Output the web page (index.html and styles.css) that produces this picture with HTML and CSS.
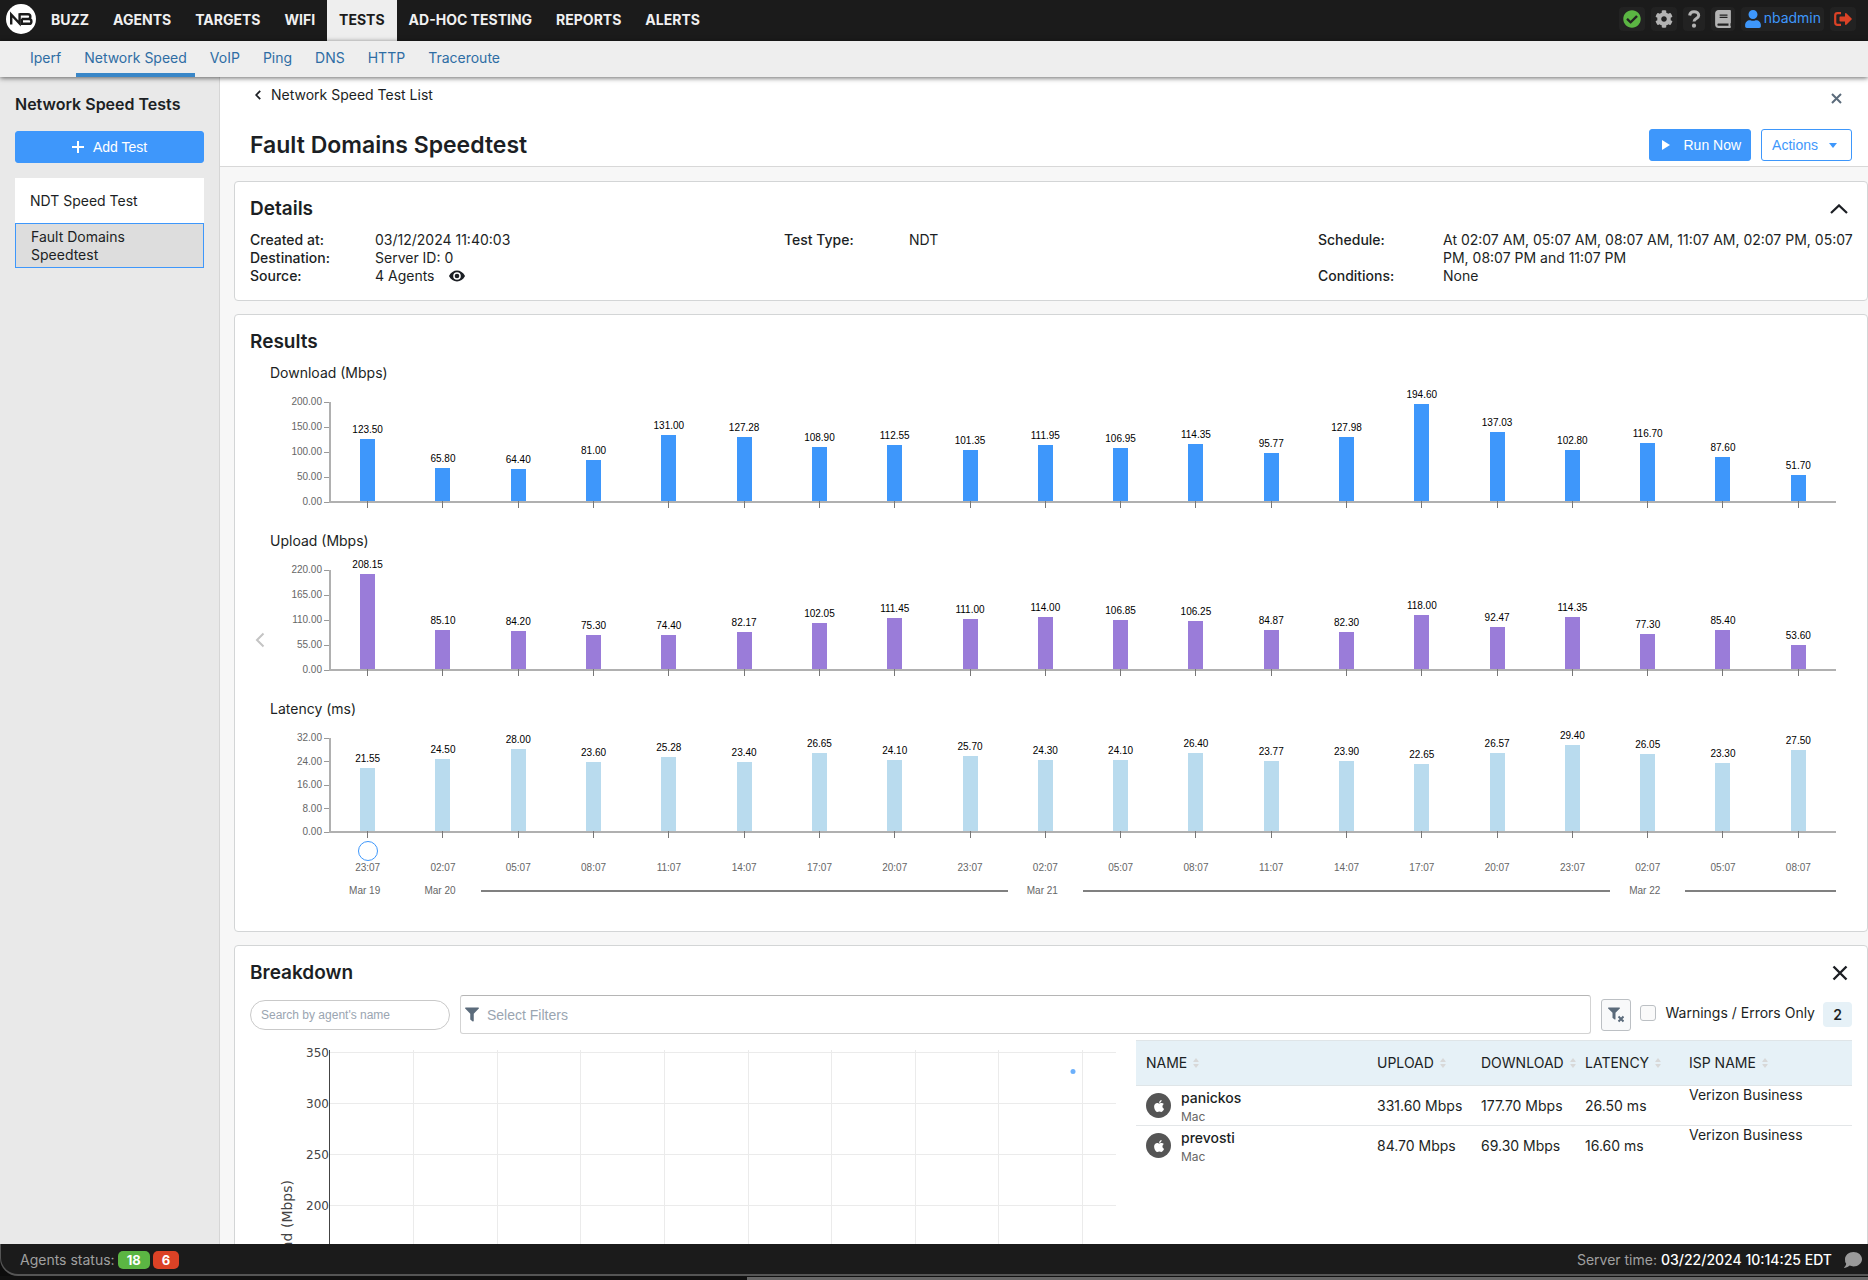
FILE: index.html
```html
<!DOCTYPE html>
<html lang="en">
<head>
<meta charset="utf-8">
<title>Network Speed Tests</title>
<link rel="stylesheet" href="styles.css">
</head>
<body>
<svg class="defs" aria-hidden="true">
  <symbol id="i-check" viewBox="0 0 512 512"><path d="M504 256c0 136.967-111.033 248-248 248S8 392.967 8 256 119.033 8 256 8s248 111.033 248 248zM227.314 387.314l184-184c6.248-6.248 6.248-16.379 0-22.627l-22.627-22.627c-6.248-6.249-16.379-6.249-22.628 0L216 308.118l-70.059-70.059c-6.248-6.248-16.379-6.248-22.628 0l-22.627 22.627c-6.248 6.248-6.248 16.379 0 22.627l104 104c6.249 6.249 16.379 6.249 22.628.001z"/></symbol>
  <symbol id="i-gear" viewBox="0 0 512 512"><path d="M487.4 315.7l-42.6-24.6c4.3-23.2 4.3-47 0-70.2l42.6-24.6c4.9-2.8 7.1-8.6 5.5-14-11.1-35.6-30-67.8-54.7-94.6-3.8-4.1-10-5.1-14.8-2.3L380.8 110c-17.9-15.4-38.5-27.3-60.8-35.1V25.8c0-5.6-3.9-10.5-9.4-11.7-36.7-8.2-74.3-7.8-109.2 0-5.5 1.2-9.4 6.1-9.4 11.7V75c-22.2 7.9-42.8 19.8-60.8 35.1L88.7 85.5c-4.9-2.8-11-1.9-14.8 2.3-24.7 26.7-43.6 58.9-54.7 94.6-1.7 5.4.6 11.2 5.5 14L67.3 221c-4.3 23.2-4.3 47 0 70.2l-42.6 24.6c-4.9 2.8-7.1 8.6-5.5 14 11.1 35.6 30 67.8 54.7 94.6 3.8 4.1 10 5.1 14.8 2.3l42.6-24.6c17.9 15.4 38.5 27.3 60.8 35.1v49.2c0 5.6 3.9 10.5 9.4 11.7 36.7 8.2 74.3 7.8 109.2 0 5.5-1.2 9.4-6.1 9.4-11.7v-49.2c22.2-7.9 42.8-19.8 60.8-35.1l42.6 24.6c4.9 2.8 11 1.9 14.8-2.3 24.7-26.7 43.6-58.9 54.7-94.6 1.5-5.5-.7-11.3-5.6-14.1zM256 336c-44.1 0-80-35.9-80-80s35.9-80 80-80 80 35.9 80 80-35.9 80-80 80z"/></symbol>
  <symbol id="i-question" viewBox="0 0 14 18"><path d="M2.6 5.4C3 3 4.6 1.7 7 1.7c2.700 0 4.700 1.500 4.700 3.800C11.700 8.600 7 8.400 7 11.500" fill="none" stroke="currentColor" stroke-width="3"/><circle cx="7" cy="15.700" r="2.100"/></symbol>
  <symbol id="i-book" viewBox="0 0 448 512"><path d="M448 360V24c0-13.300-10.700-24-24-24H96C43 0 0 43 0 96v320c0 53 43 96 96 96h328c13.300 0 24-10.700 24-24v-16c0-7.500-3.500-14.300-8.900-18.700-4.200-15.400-4.200-59.300 0-74.700 5.400-4.300 8.900-11.100 8.900-18.600zM128 134c0-3.300 2.700-6 6-6h212c3.300 0 6 2.700 6 6v20c0 3.300-2.700 6-6 6H134c-3.300 0-6-2.700-6-6v-20zm0 64c0-3.300 2.700-6 6-6h212c3.300 0 6 2.700 6 6v20c0 3.300-2.700 6-6 6H134c-3.300 0-6-2.700-6-6v-20zm253.400 250H96c-17.700 0-32-14.300-32-32 0-17.600 14.400-32 32-32h285.400c-1.900 17.100-1.900 46.900 0 64z"/></symbol>
  <symbol id="i-user" viewBox="0 0 448 512"><path d="M224 256c70.700 0 128-57.300 128-128S294.700 0 224 0 96 57.300 96 128s57.300 128 128 128zm89.600 32h-16.700c-22.200 10.200-46.900 16-72.900 16s-50.600-5.800-72.900-16h-16.700C60.200 288 0 348.200 0 422.400V464c0 26.500 21.500 48 48 48h352c26.500 0 48-21.500 48-48v-41.600c0-74.200-60.200-134.400-134.400-134.400z"/></symbol>
  <symbol id="i-exit" viewBox="0 0 18 14"><path d="M7 1.200H3.500A2.300 2.300 0 0 0 1.200 3.500v7a2.300 2.300 0 0 0 2.300 2.300H7" fill="none" stroke="currentColor" stroke-width="2.200"/><path d="M5.500 5.200c0-.4.300-.7.700-.7H11V1.700c0-.7.800-1 1.300-.5l5.300 5.200c.3.300.3.900 0 1.200l-5.300 5.200c-.5.500-1.300.2-1.300-.5V9.500H6.200a.7.700 0 0 1-.7-.7z"/></symbol>
  <symbol id="i-filter" viewBox="0 0 512 512"><path d="M487.976 0H24.028C2.710 0-8.047 25.866 7.058 40.971L192 225.941V432c0 7.831 3.821 15.170 10.237 19.662l80 55.980C298.020 518.690 320 507.493 320 487.980V225.941l184.947-184.970C520.021 25.896 509.338 0 487.976 0z"/></symbol>
  <symbol id="i-apple" viewBox="0 0 376 512"><path d="M318.700 268.700c-.2-36.700 16.400-64.400 50-84.800-18.800-26.900-47.200-41.700-84.700-44.600-35.500-2.800-74.300 20.700-88.500 20.700-15 0-49.400-19.700-76.400-19.700C63.300 141.200 4 184.800 4 273.500q0 39.300 14.400 81.200c12.800 36.700 59 126.700 107.200 125.200 25.200-.6 43-17.900 75.800-17.900 31.800 0 48.300 17.900 76.400 17.900 48.600-.7 90.400-82.500 102.600-119.300-65.200-30.700-61.700-90-61.700-91.900zm-56.600-164.200c27.300-32.400 24.800-61.900 24-72.500-24.100 1.400-52 16.400-67.900 34.900-17.500 19.800-27.800 44.300-25.600 71.900 26.100 2 49.900-11.400 69.500-34.300z"/></symbol>
  <symbol id="i-sort" viewBox="0 0 6 10"><path d="M3 0l2.500 3.200a.5.500 0 0 1-.4.900H.9a.5.500 0 0 1-.4-.9zM3 10L.5 6.800a.5.500 0 0 1 .4-.9h4.200a.5.500 0 0 1 .4.900z"/></symbol>
</svg>

<header class="topbar">
  <a class="logo" href="#" aria-label="Home">
    <svg viewBox="0 0 30 30" width="30" height="30"><circle cx="15" cy="15" r="15" fill="#fff"/><g fill="none" stroke="#1b1b1b" stroke-width="2.400"><path d="M5.200 20.500V10.500L13.600 19.500V9.300"/><path d="M13.600 10.300H22a2.200 2.200 0 0 1 0 4.700H15.500H23a2.300 2.300 0 0 1 0 4.800H15.800V15"/></g></svg>
  </a>
  <nav class="mainnav" aria-label="Main">
    <a href="#">BUZZ</a><a href="#">AGENTS</a><a href="#">TARGETS</a><a href="#">WIFI</a><a class="active" href="#">TESTS</a><a href="#">AD-HOC TESTING</a><a href="#">REPORTS</a><a href="#">ALERTS</a>
  </nav>
  <div class="tools">
    <button class="tool ok" aria-label="Status"><svg width="18" height="18"><use href="#i-check"/></svg></button>
    <button class="tool" aria-label="Settings"><svg width="18" height="18"><use href="#i-gear"/></svg></button>
    <button class="tool" aria-label="Help"><svg width="14" height="18"><use href="#i-question"/></svg></button>
    <button class="tool" aria-label="Documentation"><svg width="16" height="18"><use href="#i-book"/></svg></button>
    <a class="tool user" href="#"><svg width="16" height="18"><use href="#i-user"/></svg>nbadmin</a>
    <button class="tool exit" aria-label="Log out"><svg width="18" height="14"><use href="#i-exit"/></svg></button>
  </div>
</header>

<nav class="subnav" aria-label="Tests">
  <a href="#">Iperf</a><a class="active" href="#">Network Speed</a><a href="#">VoIP</a><a href="#">Ping</a><a href="#">DNS</a><a href="#">HTTP</a><a href="#">Traceroute</a>
</nav>

<div class="body">
  <aside class="sidebar">
    <h2>Network Speed Tests</h2>
    <button class="btn primary add"><svg width="12" height="12" viewBox="0 0 12 12"><path d="M6 0v12M0 6h12" stroke="#fff" stroke-width="2"/></svg>Add Test</button>
    <div class="tests">
      <a href="#">NDT Speed Test</a>
      <a class="active" href="#">Fault Domains Speedtest</a>
    </div>
  </aside>

  <main>
    <div class="pagehead">
      <div class="headrow">
        <a class="back" href="#"><svg width="6" height="10" viewBox="0 0 6 10"><path d="M5.200 .8L1.200 5l4 4.200" fill="none" stroke="currentColor" stroke-width="1.800"/></svg>Network Speed Test List</a>
        <button class="plain close" aria-label="Close"><svg width="11" height="11" viewBox="0 0 11 11"><path d="M1 1l9 9M10 1l-9 9" stroke="currentColor" stroke-width="2"/></svg></button>
      </div>
      <div class="headrow titlerow">
        <h1>Fault Domains Speedtest</h1>
        <div class="actions">
          <button class="btn primary run"><svg width="8" height="10" viewBox="0 0 8 10"><path d="M0 0l8 5-8 5z" fill="#fff"/></svg>Run Now</button>
          <button class="btn outline">Actions<svg width="8" height="5" viewBox="0 0 8 5"><path d="M0 0h8L4 5z" fill="currentColor"/></svg></button>
        </div>
      </div>
    </div>

    <div class="cards">
      <section class="card">
        <div class="cardhead"><h2>Details</h2><button class="plain" aria-label="Collapse"><svg width="18" height="10" viewBox="0 0 18 10"><path d="M1 9l8-7.600L17 9" fill="none" stroke="currentColor" stroke-width="2.200"/></svg></button></div>
        <div class="details">
          <dl><dt>Created at:</dt><dd>03/12/2024 11:40:03</dd><dt>Destination:</dt><dd>Server ID: 0</dd><dt>Source:</dt><dd class="src">4 Agents <svg width="16" height="12" viewBox="0 0 16 12"><path fill="#1c1f24" fill-rule="evenodd" d="M8 .5c3.300 0 6.200 2 7.900 5.200a.7.700 0 0 1 0 .6C14.200 9.500 11.300 11.500 8 11.500S1.800 9.500.1 6.300a.7.700 0 0 1 0-.6C1.800 2.500 4.700.5 8 .5zM8 2.200a3.800 3.800 0 1 0 0 7.600 3.800 3.800 0 0 0 0-7.600z"/><circle cx="8" cy="6" r="2.300" fill="#1c1f24"/></svg></dd></dl>
          <dl><dt>Test Type:</dt><dd>NDT</dd></dl>
          <dl><dt>Schedule:</dt><dd class="schedule">At 02:07 AM, 05:07 AM, 08:07 AM, 11:07 AM, 02:07 PM, 05:07 PM, 08:07 PM and 11:07 PM</dd><dt>Conditions:</dt><dd>None</dd></dl>
        </div>
      </section>

      <section class="card">
        <div class="cardhead"><h2>Results</h2></div>
        <div class="results">
          <button class="plain prev" aria-label="Earlier results"><svg width="10" height="16" viewBox="0 0 10 16"><path d="M8.500 1.500L2 8l6.500 6.500" fill="none" stroke="currentColor" stroke-width="2"/></svg></button>
          <div class="charts" id="charts"></div>
        </div>
      </section>

      <section class="card">
        <div class="cardhead"><h2>Breakdown</h2><button class="plain" aria-label="Close breakdown"><svg width="16" height="16" viewBox="0 0 16 16"><path d="M1.500 1.500l13 13M14.500 1.500l-13 13" stroke="currentColor" stroke-width="2.400"/></svg></button></div>
        <div class="filters">
          <input class="search" type="text" placeholder="Search by agent's name" aria-label="Search by agent's name">
          <label class="filterbox"><svg width="14" height="15"><use href="#i-filter"/></svg><input type="text" placeholder="Select Filters" aria-label="Select Filters"></label>
          <button class="clear" aria-label="Clear filters"><svg width="16" height="16" viewBox="0 0 16 16"><svg width="12" height="13"><use href="#i-filter"/></svg><path d="M10.500 9.500l5 5M15.500 9.500l-5 5" stroke="currentColor" stroke-width="2"/></svg></button>
          <label class="warn"><input type="checkbox">Warnings / Errors Only</label>
          <span class="count">2</span>
        </div>
        <div class="breakdown">
          <svg class="scatter" viewBox="0 0 870 460">
            <path stroke="#ebebeb" stroke-width="1" d="M80 12.500h786M80 63.500h786M80 114.500h786M80 165.500h786M80 216.500h786M80 267.500h786M80 318.500h786M163.500 10v370M247.500 10v370M330.500 10v370M414.500 10v370M498.500 10v370M581.500 10v370M665.500 10v370M748.500 10v370M832.500 10v370"/>
            <path stroke="#444" stroke-width="1" d="M79.500 10v370"/>
            <g text-anchor="end"><text x="79" y="17">350</text><text x="79" y="68">300</text><text x="79" y="119">250</text><text x="79" y="170">200</text></g>
            <text class="axis" transform="translate(42 140) rotate(-90)" text-anchor="end">Upload (Mbps)</text>
            <circle cx="823" cy="31.500" r="2.500" fill="#6cb0fb"/>
          </svg>
          <table>
            <colgroup><col class="c-name"><col class="c-num"><col class="c-num"><col class="c-num"><col></colgroup>
            <thead><tr><th>NAME<svg width="6" height="10"><use href="#i-sort"/></svg></th><th>UPLOAD<svg width="6" height="10"><use href="#i-sort"/></svg></th><th>DOWNLOAD<svg width="6" height="10"><use href="#i-sort"/></svg></th><th>LATENCY<svg width="6" height="10"><use href="#i-sort"/></svg></th><th>ISP NAME<svg width="6" height="10"><use href="#i-sort"/></svg></th></tr></thead>
            <tbody>
              <tr><td><div class="agent"><span class="os"><svg width="10" height="14"><use href="#i-apple"/></svg></span><div><b>panickos</b><small>Mac</small></div></div></td><td>331.60 Mbps</td><td>177.70 Mbps</td><td>26.50 ms</td><td class="isp">Verizon Business</td></tr>
              <tr><td><div class="agent"><span class="os"><svg width="10" height="14"><use href="#i-apple"/></svg></span><div><b>prevosti</b><small>Mac</small></div></div></td><td>84.70 Mbps</td><td>69.30 Mbps</td><td>16.60 ms</td><td class="isp">Verizon Business</td></tr>
            </tbody>
          </table>
        </div>
      </section>
    </div>
  </main>
</div>

<div class="dock">
  <footer class="status">
    <div class="agents">Agents status: <span class="pill up">18</span><span class="pill down">6</span></div>
    <div class="time">Server time: <b>03/22/2024 10:14:25 EDT</b><svg width="18" height="16" viewBox="0 0 18 16"><path fill="#9a9a9a" d="M9.500 0C14.200 0 18 3.200 18 7.200s-3.800 7.200-8.500 7.200c-1.400 0-2.700-.3-3.800-.8C4.500 14.800 2.500 15.800.6 16c-.4 0-.6-.4-.3-.7.900-1 1.700-2.200 1.900-3.600A6.600 6.600 0 0 1 1 7.200C1 3.200 4.800 0 9.500 0z"/></svg></div>
  </footer>
  <div class="desk"><i></i></div>
</div>
<script src="app.js"></script>
</body>
</html>
```
FILE: styles.css
```css
* { box-sizing: border-box; }

body {
  margin: 0;
  height: 100vh;
  display: flex;
  flex-direction: column;
  overflow: hidden;
  background: #f7f7f7;
  color: #1c1f24;
  font: 14px/18px Inter, "Liberation Sans", sans-serif;
}

h1, h2, dl, dd { margin: 0; }
a { color: inherit; text-decoration: none; }
button, input { font: inherit; color: inherit; }
svg { display: block; fill: currentColor; flex: none; }
.defs { position: absolute; width: 0; height: 0; }

/* Top bar */
.topbar {
  flex: none;
  display: flex;
  height: 41px;
  background: #1b1b1b;
  color: #f0f0f0;
}
.logo { padding: 4px 3px 0 6px; }
.mainnav { display: flex; font-weight: 700; }
.mainnav a { padding: 0 12px; line-height: 40px; }
.mainnav .active { background: #eee; color: #1b1b1b; }
.tools {
  display: flex;
  gap: 6px;
  margin-left: auto;
  padding: 7px 12px 0 0;
  color: #b3b3b3;
}
.tool {
  display: flex;
  align-items: center;
  gap: 3px;
  height: 24px;
  padding: 0 4px;
  border: 0;
  border-radius: 4px;
  background: #222;
}
.tool.ok { color: #5bb543; }
.tool.user { padding-right: 3px; color: #3e97fb; line-height: 22px; align-items: flex-start; }
.tool.user svg { margin-top: 3px; }
.tool.exit { color: #db4226; }

/* Secondary navigation */
.subnav {
  flex: none;
  display: flex;
  gap: 7px;
  height: 36px;
  padding-left: 22px;
  background: #eee;
  color: #2e6da4;
  box-shadow: 0 1px 5px rgba(0, 0, 0, .6);
  z-index: 1;
}
.subnav a { padding: 0 8px; line-height: 34px; }
.subnav .active { border-bottom: 4px solid #3a87c8; }

.body { flex: 1; display: flex; min-height: 0; }

/* Sidebar */
.sidebar {
  flex: none;
  width: 220px;
  padding: 17px 15px;
  background: #e9e9e9;
  border-right: 1px solid #d6d6d6;
}
.sidebar h2 { font-size: 16px; line-height: 20px; font-weight: 600; white-space: nowrap; }
.btn {
  display: flex;
  align-items: center;
  justify-content: center;
  height: 32px;
  border: 1px solid #3e97fb;
  border-radius: 3px;
  font-family: "Liberation Sans", Arial, sans-serif;
}
.primary { background: #3e97fb; color: #fff; }
.outline { background: #fff; color: #3e97fb; }
.add { width: 100%; margin-top: 17px; gap: 9px; }
.tests { margin-top: 15px; background: #fff; }
.tests a {
  display: flex;
  align-items: center;
  height: 45px;
  padding: 0 15px;
}
.tests .active { background: #ddd; border: 1px solid #3e97fb; }

/* Page heading */
main { flex: 1; min-width: 0; overflow: hidden; }
.pagehead {
  padding: 8px 16px 5px 30px;
  background: #fff;
  border-bottom: 1px solid #d8d8d8;
}
.headrow { display: flex; justify-content: space-between; align-items: center; }
.back { display: flex; align-items: center; gap: 10px; padding-left: 5px; }
.plain { display: flex; padding: 0; border: 0; background: none; }
.close { margin: 8px 10px 0 0; color: #5b6b7b; }
.titlerow { margin-top: 25px; }
h1 { font-size: 23px; line-height: 32px; font-weight: 600; }
.actions { display: flex; gap: 10px; }
.run { gap: 13px; padding: 0 9px 0 12px; }
.outline { gap: 11px; padding: 0 14px 0 10px; }

/* Cards */
.cards { display: flex; flex-direction: column; gap: 13px; padding: 14px 0 15px 14px; }
.card { padding: 15px; background: #fff; border: 1px solid #d3d5d6; border-radius: 4px; }
.cardhead { display: flex; justify-content: space-between; align-items: center; height: 24px; }
.cardhead h2 { font-size: 19px; line-height: 24px; font-weight: 600; }
.cardhead .plain { margin-right: 4px; }

.details { display: grid; grid-template-columns: repeat(3, 1fr); margin-top: 10px; }
.details dl { display: grid; grid-template-columns: 125px 1fr; align-content: start; }
.details dt { font-weight: 500; }
.details .schedule { margin-right: -8px; }
.src { display: flex; align-items: center; gap: 14px; }

/* Results */
.results { display: grid; grid-template-columns: 20px 1fr; align-items: center; margin-top: 9px; }
.prev { color: #c4c4c4; padding-left: 5px; }
.charts { padding: 0 16px 18px 0; }
.chart { margin-bottom: 29px; }
.chart.last { margin-bottom: 9px; }
.chart h3 { margin: 0 0 19px; font-size: 14px; line-height: 20px; font-weight: 400; }
.plot, .timeline {
  display: grid;
  grid-template-columns: 60px 1fr;
  font: 10px/14px "Liberation Sans", Arial, sans-serif;
  color: #666;
}
.plot { grid-template-rows: 100px; }
.last .plot { grid-template-rows: 94px; }
.ticks { display: flex; flex-direction: column; justify-content: space-between; }
.ticks span { display: flex; align-items: center; justify-content: flex-end; gap: 2px; height: 0; }
.ticks span::after { content: ""; width: 6px; height: 1px; background: #999; }
.bars {
  display: flex;
  padding-left: 1px;
  box-shadow: inset 2px 0 #b0b0b0;
  border-bottom: 2px solid #b0b0b0;
  margin: 0 0 -1px -1px;
}
.slot { flex: 1 1 0; display: flex; flex-direction: column; align-items: center; justify-content: flex-end; margin-bottom: -7px; color: #000; }
.slot i { width: 15px; margin-top: 2px; flex: none; }
.slot::after { content: ""; width: 1px; height: 7px; background: #777; flex: none; }
.download i { background: #3e97fb; }
.upload i { background: #9a7cd9; }
.latency i { background: #b9dbee; }
.handle {
  width: 20px;
  height: 20px;
  border: 1px solid #3e97fb;
  border-radius: 50%;
  background: #fff;
}
.row { grid-column: 2; display: grid; grid-auto-flow: column; grid-auto-columns: minmax(0, 1fr); }
.row > * { display: flex; justify-content: center; }
.dates { margin-top: 9px; }
.dates span { padding-right: 6px; }
.dates i { height: 2px; margin-top: 6px; background: #808080; }

/* Breakdown */
.filters { display: flex; align-items: center; height: 39px; margin-top: 10px; }
input::placeholder { color: #9aa5b1; opacity: 1; }
.search {
  width: 200px;
  height: 30px;
  padding: 0 10px;
  border: 1px solid #c9c9c9;
  border-radius: 15px;
  font: 12px "Liberation Sans", Arial, sans-serif;
}
.filterbox {
  flex: 1;
  display: flex;
  align-items: center;
  gap: 8px;
  height: 39px;
  margin: 0 10px;
  padding: 0 4px;
  border: 1px solid #d3d3d3;
  border-top-color: #b5b5b5;
  border-radius: 3px;
  color: #5b6b7b;
}
.filterbox input { flex: 1; border: 0; outline: 0; padding: 0; font: 14px "Liberation Sans", Arial, sans-serif; }
.clear {
  display: flex;
  align-items: center;
  justify-content: center;
  width: 30px;
  height: 32px;
  padding: 0;
  border: 1px solid #bcc0c4;
  border-radius: 3px;
  background: #f8f9fa;
  color: #5b6b7b;
}
.warn { display: flex; align-items: center; gap: 9px; margin: 0 8px 0 9px; padding-bottom: 4px; white-space: nowrap; }
.warn input {
  appearance: none;
  width: 16px;
  height: 16px;
  margin: 0;
  border: 1px solid #bcc0c4;
  border-radius: 3px;
  background: #fafafa;
}
.count { width: 29px; border-radius: 4px; background: #e6f1f7; line-height: 25px; font-weight: 600; text-align: center; }
.breakdown { display: grid; grid-template-columns: 870fr 716fr; gap: 16px; align-items: start; margin-top: 6px; }
.scatter { width: 100%; font: 12px "DejaVu Sans", Verdana, sans-serif; fill: #444; }
.axis { font-size: 14px; }
table { width: 100%; table-layout: fixed; border-collapse: collapse; }
.c-name { width: 231px; }
.c-num { width: 104px; }
th {
  height: 45px;
  padding: 0 0 0 10px;
  background: #e6f1f7;
  border: solid #dfe5e8;
  border-width: 1px 0;
  font-weight: 400;
  text-align: left;
  white-space: nowrap;
}
th svg { display: inline-block; margin-left: 6px; color: #d8d8d8; }
td { height: 40px; padding: 0 0 0 10px; border-bottom: 1px solid #e3e6e8; white-space: nowrap; }
tbody tr:last-child td { border: 0; }
.isp { vertical-align: top; }
.agent { display: flex; align-items: center; gap: 10px; }
.agent b { display: block; font-weight: 500; line-height: 22px; }
.agent small { display: block; font-size: 12px; line-height: 16px; color: #666; }
.os {
  display: flex;
  align-items: center;
  justify-content: center;
  width: 25px;
  height: 25px;
  border-radius: 50%;
  background: #555;
  color: #fff;
}

/* Status bar */
.dock { flex: none; background: #0c0c0c; }
.status {
  display: flex;
  justify-content: space-between;
  height: 32px;
  padding: 1px 6px 0 19px;
  background: #1b1b1b;
  border: solid #555;
  border-width: 0 0 2px 1px;
  border-radius: 0 0 0 18px;
  color: #a0a0a0;
  line-height: 30px;
}
.agents, .time { display: flex; align-items: center; gap: 4px; }
.agents { gap: 3px; }
.pill { border-radius: 5px; padding: 0 9px; line-height: 18px; font-size: 13px; font-weight: 700; color: #fff; }
.up { background: #5bb543; }
.down { background: #db4226; }
.time b { font-weight: 500; color: #fff; }
.time svg { margin-left: 8px; }
.desk { height: 4px; padding-top: 1px; background: #111; }
.desk i { display: block; width: 60%; height: 3px; margin-left: auto; background: #666; }
```
FILE: app.js
```js
const series = [
  { name: 'Download (Mbps)', cls: 'download', max: 200, ticks: 5,
    values: [123.5, 65.8, 64.4, 81, 131, 127.28, 108.9, 112.55, 101.35, 111.95, 106.95, 114.35, 95.77, 127.98, 194.6, 137.03, 102.8, 116.7, 87.6, 51.7] },
  { name: 'Upload (Mbps)', cls: 'upload', max: 220, ticks: 5,
    values: [208.15, 85.1, 84.2, 75.3, 74.4, 82.17, 102.05, 111.45, 111, 114, 106.85, 106.25, 84.87, 82.3, 118, 92.47, 114.35, 77.3, 85.4, 53.6] },
  { name: 'Latency (ms)', cls: 'latency last', max: 32, ticks: 5,
    values: [21.55, 24.5, 28, 23.6, 25.28, 23.4, 26.65, 24.1, 25.7, 24.3, 24.1, 26.4, 23.77, 23.9, 22.65, 26.57, 29.4, 26.05, 23.3, 27.5] }
];
const times = ['23:07', '02:07', '05:07', '08:07', '11:07', '14:07', '17:07', '20:07'];
const dates = { 0: 'Mar 19', 1: 'Mar 20', 9: 'Mar 21', 17: 'Mar 22' };
const hours = Array.from({ length: 20 }, (_, i) => times[i % 8]);

const chart = s => {
  const height = s.max === 32 ? 94 : 100;
  const ticks = Array.from({ length: s.ticks }, (_, i) =>
    `<span>${(s.max * (1 - i / (s.ticks - 1))).toFixed(2)}</span>`).join('');
  const bars = s.values.map(v =>
    `<div class="slot">${v.toFixed(2)}<i style="height:${Math.round(v / s.max * height)}px"></i></div>`).join('');
  return `<div class="chart ${s.cls}"><h3>${s.name}</h3><div class="plot"><div class="ticks">${ticks}</div><div class="bars">${bars}</div></div></div>`;
};

const timeline = `<div class="timeline">
  <div class="row">${hours.map((_, i) => `<div>${i ? '' : '<div class="handle"></div>'}</div>`).join('')}</div>
  <div class="row">${hours.map(t => `<span>${t}</span>`).join('')}</div>
  <div class="row dates">${hours.map((_, i) => dates[i] ? `<span>${dates[i]}</span>` : '<i></i>').join('')}</div>
</div>`;

document.getElementById('charts').innerHTML = series.map(chart).join('') + timeline;
```
